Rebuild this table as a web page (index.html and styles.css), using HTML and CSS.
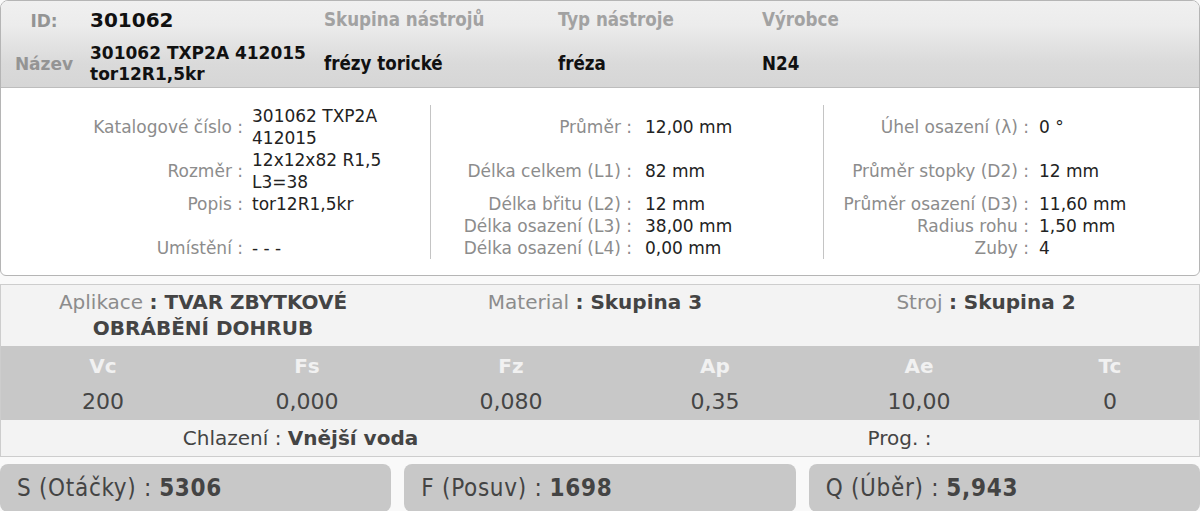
FILE: index.html
```html
<!DOCTYPE html>
<html lang="cs">
<head>
<meta charset="utf-8">
<title>Nástroj 301062</title>
<link rel="stylesheet" href="styles.css">
</head>
<body>
<div class="card">
  <div class="head">
    <div class="hrow r1">
      <div class="hl">ID:</div>
      <div class="hv big">301062</div>
      <div class="hk">Skupina nástrojů</div>
      <div class="hk">Typ nástroje</div>
      <div class="hk">Výrobce</div>
    </div>
    <div class="hrow r2">
      <div class="hl">Název</div>
      <div class="hv">301062 TXP2A 412015 tor12R1,5kr</div>
      <div class="hc">frézy torické</div>
      <div class="hc">fréza</div>
      <div class="hc">N24</div>
    </div>
  </div>
  <div class="details">
    <div class="col c1">
      <div class="lab">Katalogové číslo :</div><div class="val">301062 TXP2A 412015</div>
      <div class="lab">Rozměr :</div><div class="val">12x12x82 R1,5 L3=38</div>
      <div class="lab">Popis :</div><div class="val">tor12R1,5kr</div>
      <div class="lab"></div><div class="val"></div>
      <div class="lab">Umístění :</div><div class="val">- - -</div>
    </div>
    <div class="col c2">
      <div class="lab">Průměr :</div><div class="val">12,00 mm</div>
      <div class="lab">Délka celkem (L1) :</div><div class="val">82 mm</div>
      <div class="lab">Délka břitu (L2) :</div><div class="val">12 mm</div>
      <div class="lab">Délka osazení (L3) :</div><div class="val">38,00 mm</div>
      <div class="lab">Délka osazení (L4) :</div><div class="val">0,00 mm</div>
    </div>
    <div class="col c3">
      <div class="lab">Úhel osazení (λ) :</div><div class="val">0 °</div>
      <div class="lab">Průměr stopky (D2) :</div><div class="val">12 mm</div>
      <div class="lab">Průměr osazení (D3) :</div><div class="val">11,60 mm</div>
      <div class="lab">Radius rohu :</div><div class="val">1,50 mm</div>
      <div class="lab">Zuby :</div><div class="val">4</div>
    </div>
  </div>
</div>

<div class="app">
  <div class="arow">
    <div class="acell"><span class="alab">Aplikace</span> <b>: TVAR ZBYTKOVÉ</b> <b>OBRÁBĚNÍ DOHRUB</b></div>
    <div class="acell"><span class="alab">Material</span> <b>: Skupina 3</b></div>
    <div class="acell"><span class="alab">Stroj</span> <b>: Skupina 2</b></div>
  </div>
  <div class="band">
    <div class="bh">Vc</div><div class="bh">Fs</div><div class="bh">Fz</div><div class="bh">Ap</div><div class="bh">Ae</div><div class="bh">Tc</div>
    <div class="bv">200</div><div class="bv">0,000</div><div class="bv">0,080</div><div class="bv">0,35</div><div class="bv">10,00</div><div class="bv">0</div>
  </div>
  <div class="crow">
    <div class="ccell">Chlazení : <b>Vnější voda</b></div>
    <div class="ccell">Prog. :</div>
  </div>
</div>

<div class="totals">
  <div class="tbox">S (Otáčky) : <b>5306</b></div>
  <div class="tbox">F (Posuv) : <b>1698</b></div>
  <div class="tbox">Q (Úběr) : <b>5,943</b></div>
</div>
</body>
</html>
```

FILE: styles.css
```css
html, body {
  margin: 0;
  padding: 0;
  background: #f9f9f9;
  font-family: "DejaVu Sans", Verdana, sans-serif;
  color: #222;
}

.card {
  border: 1px solid #b5b5b5;
  border-radius: 8px 8px 6px 6px;
  overflow: hidden;
  background: #fff;
}

.head {
  background: linear-gradient(#f0f0f0 0%, #ececec 28%, #dadada 72%, #d6d6d6 100%);
  border-bottom: 1px solid #bdbdbd;
}

.hrow {
  display: grid;
  grid-template-columns: 89px 234px 234px 204px 1fr;
  align-items: center;
}

.r1 { height: 39px; }
.r2 { height: 47px; }

.hl {
  text-align: center;
  padding-right: 3px;
  font-weight: bold;
  font-size: 17px;
  color: #949494;
}

.hv {
  font-weight: bold;
  font-size: 17px;
  line-height: 21px;
  color: #111;
  padding-right: 8px;
}

.hv.big {
  font-size: 20px;
}

.hk, .hc {
  font-family: "DejaVu Sans Condensed", "DejaVu Sans", sans-serif;
  font-stretch: condensed;
  font-weight: bold;
  font-size: 18.6px;
}

.hk { color: #a2a2a2; padding-bottom: 3px; }
.hc { color: #111; }

.details {
  display: grid;
  grid-template-columns: 430px 393px 1fr;
  padding: 17px 0 16px;
}

.col {
  display: grid;
  grid-template-rows: 44px 44px 22px 22px 22px;
  align-items: center;
  font-size: 17px;
  line-height: 22px;
}

.c1 { grid-template-columns: 242px 1fr; border-right: 1px solid #c4c4c4; }
.c2 { grid-template-columns: 201px 1fr; border-right: 1px solid #c4c4c4; }
.c3 { grid-template-columns: 205px 1fr; }

.lab {
  text-align: right;
  color: #8c8c8c;
  white-space: nowrap;
}

.val {
  color: #222;
  padding-left: 10px;
}

.c1 .val { padding-left: 9px; padding-right: 8px; }
.c2 .val { padding-left: 13px; }

.app {
  margin-top: 8px;
  border: 1px solid #cdcdcd;
  background: #f3f3f3;
}

.arow {
  display: grid;
  grid-template-columns: 404px 380px 402px;
  height: 61px;
  box-sizing: border-box;
  padding-top: 4px;
  font-size: 20px;
  line-height: 26px;
}

.acell {
  text-align: center;
  color: #444;
}

.acell b { font-weight: bold; }
.alab { color: #8c8c8c; }

.band {
  display: grid;
  grid-template-columns: repeat(5, 204px) 1fr;
  grid-template-rows: 40px 34px;
  background: #c8c8c8;
  align-items: center;
  text-align: center;
}

.bh {
  color: #f1f1f1;
  font-weight: bold;
  font-size: 20px;
}

.bv {
  color: #454545;
  font-size: 22px;
  padding-bottom: 3px;
}

.crow {
  display: grid;
  grid-template-columns: 1fr 1fr;
  height: 36px;
  align-items: center;
  font-size: 20px;
  color: #444;
  text-align: center;
}

.totals {
  margin-top: 7px;
  display: grid;
  grid-template-columns: 1fr 1fr 1fr;
  gap: 13px;
}

.tbox {
  height: 48px;
  display: flex;
  align-items: center;
  padding-left: 17px;
  background: #c8c8c8;
  border-radius: 8px;
  font-family: "DejaVu Sans Condensed", "DejaVu Sans", sans-serif;
  font-stretch: condensed;
  font-size: 24px;
  color: #444;
  letter-spacing: 0.7px;
}

.tbox b { margin-left: 0.3em; }
```
